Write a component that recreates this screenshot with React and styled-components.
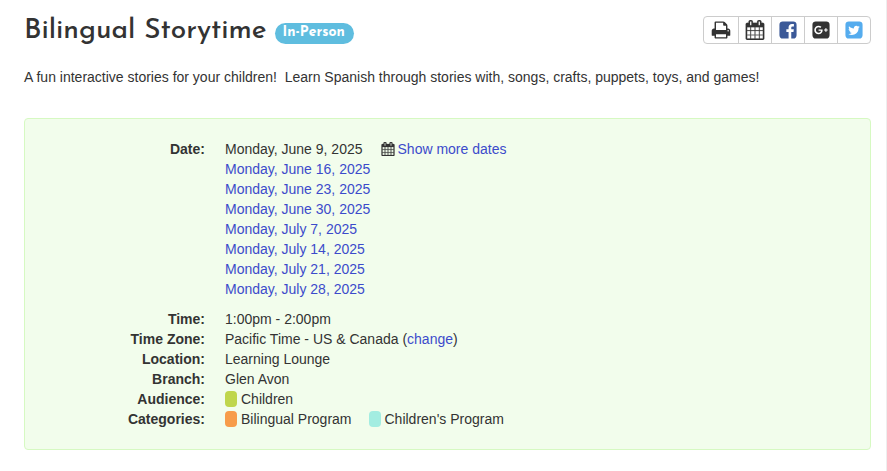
import React from 'react';
import styled, { createGlobalStyle } from 'styled-components';

const PRINT = 'M448 1536h896v-256h-896v256zm0-640h896v-384h-160q-40 0-68-28t-28-68v-160h-640v640zm1152 64q0-26-19-45t-45-19-45 19-19 45 19 45 45 19 45-19 19-45zm128 0v416q0 13-9.5 22.5t-22.5 9.5h-224v160q0 40-28 68t-68 28h-960q-40 0-68-28t-28-68v-160h-224q-13 0-22.5-9.5t-9.5-22.5v-416q0-79 56.5-135.5t135.5-56.5h64v-544q0-40 28-68t68-28h672q40 0 88 20t76 48l152 152q28 28 48 76t20 88v256h64q79 0 135.5 56.5t56.5 135.5z';
const CALENDAR = 'M192 1664h288v-288h-288v288zm352 0h320v-288h-320v288zm-352-352h288v-320h-288v320zm352 0h320v-320h-320v320zm-352-384h288v-288h-288v288zm736 736h320v-288h-320v288zm-384-736h320v-288h-320v288zm768 736h288v-288h-288v288zm-384-352h320v-320h-320v320zm-352-864v-288q0-13-9.5-22.5t-22.5-9.5h-64q-13 0-22.5 9.5t-9.5 22.5v288q0 13 9.5 22.5t22.5 9.5h64q13 0 22.5-9.5t9.5-22.5zm736 864h288v-320h-288v320zm-384-384h320v-288h-320v288zm384 0h288v-288h-288v288zm32-480v-288q0-13-9.5-22.5t-22.5-9.5h-64q-13 0-22.5 9.5t-9.5 22.5v288q0 13 9.5 22.5t22.5 9.5h64q13 0 22.5-9.5t9.5-22.5zm384-64v1280q0 52-38 90t-90 38h-1408q-52 0-90-38t-38-90v-1280q0-52 38-90t90-38h128v-96q0-66 47-113t113-47h64q66 0 113 47t47 113v96h384v-96q0-66 47-113t113-47h64q66 0 113 47t47 113v96h128q52 0 90 38t38 90z';
const FACEBOOK = 'M1376 128q119 0 203.5 84.5t84.5 203.5v960q0 119-84.5 203.5t-203.5 84.5h-188v-595h199l30-232h-229v-148q0-56 23.5-84t91.5-28l122-1v-207q-63-9-178-9-136 0-217.5 80t-81.5 226v171h-200v232h200v595h-532q-119 0-203.5-84.5t-84.5-203.5v-960q0-119 84.5-203.5t203.5-84.5h960z';
const GOOGLE_PLUS = 'M1045 905q0-26-6-64h-362v132h217q-3 24-16.5 50t-37.5 53-66.5 44.5-96.5 17.5q-99 0-169-71t-70-171 70-171 169-71q92 0 153 59l104-101q-108-100-257-100-160 0-272 112.5t-112 271.5 112 271.5 272 112.5q165 0 266.5-105t101.5-270zm345 46h109v-110h-109v-110h-110v110h-110v110h110v110h110v-110zm274-535v960q0 119-84.5 203.5t-203.5 84.5h-960q-119 0-203.5-84.5t-84.5-203.5v-960q0-119 84.5-203.5t203.5-84.5h960q119 0 203.5 84.5t84.5 203.5z';
const TWITTER = 'M1408 610q-56 25-121 34 68-40 93-117-65 38-134 51-61-66-153-66-87 0-148.5 61.5t-61.5 148.5q0 29 5 48-129-7-242-65t-192-155q-29 50-29 106 0 114 91 175-47-1-100-26v2q0 75 50 133.5t123 72.5q-29 8-51 8-13 0-39-4 21 63 74.5 104t121.5 42q-116 90-261 90-26 0-50-3 148 94 322 94 112 0 210-35.5t168-95 120.5-137 75-162 24.5-168.5q0-18-1-27 63-45 105-109zm256-194v960q0 119-84.5 203.5t-203.5 84.5h-960q-119 0-203.5-84.5t-84.5-203.5v-960q0-119 84.5-203.5t203.5-84.5h960q119 0 203.5 84.5t84.5 203.5z';

const actions = [
    { label: 'Print', path: PRINT, color: '#333' },
    { label: 'Add to calendar', path: CALENDAR, color: '#333', weight: 16 },
    { label: 'Share on Facebook', path: FACEBOOK, color: '#3b5998' },
    { label: 'Share on Google Plus', path: GOOGLE_PLUS, color: '#333' },
    { label: 'Share on Twitter', path: TWITTER, color: '#55acee' },
];

const moreDates = [
    'Monday, June 16, 2025',
    'Monday, June 23, 2025',
    'Monday, June 30, 2025',
    'Monday, July 7, 2025',
    'Monday, July 14, 2025',
    'Monday, July 21, 2025',
    'Monday, July 28, 2025',
];

const Icon = ({ path, size, weight = 0 }) => (
    <IconSvg viewBox="0 0 1792 1792" $size={size} aria-hidden="true">
        <path d={path} stroke="currentColor" strokeWidth={weight} />
    </IconSvg>
);

const Field = ({ label, children }) => (
    <FieldRow>
        <FieldLabel>{label}:</FieldLabel>
        <FieldValue>{children}</FieldValue>
    </FieldRow>
);

const App = () => (
    <Page>
        <GlobalStyle />
        <Header>
            <Title>Bilingual Storytime</Title>
            <Badge>In-Person</Badge>
            <ButtonGroup>
                {actions.map(({ label, path, color, weight }) => (
                    <ActionButton key={label} type="button" aria-label={label} $color={color}>
                        <Icon path={path} size={20} weight={weight} />
                    </ActionButton>
                ))}
            </ButtonGroup>
        </Header>
        <Description>
            A fun interactive stories for your children!&nbsp; Learn Spanish through stories with, songs, crafts, puppets, toys, and games!
        </Description>
        <Details>
            <Field label="Date">
                <DateLine>
                    <span>Monday, June 9, 2025</span>
                    <ShowMore>
                        <Icon path={CALENDAR} size={14} weight={30} />
                        <Link href="#dates">Show more dates</Link>
                    </ShowMore>
                </DateLine>
                <DateList>
                    {moreDates.map(date => (
                        <li key={date}><Link href="#date">{date}</Link></li>
                    ))}
                </DateList>
            </Field>
            <Field label="Time">1:00pm - 2:00pm</Field>
            <Field label="Time Zone">
                Pacific Time - US &amp; Canada (<Link href="#timezone">change</Link>)
            </Field>
            <Field label="Location">Learning Lounge</Field>
            <Field label="Branch">Glen Avon</Field>
            <Field label="Audience">
                <Tags>
                    <Tag $color="#bfd64b">Children</Tag>
                </Tags>
            </Field>
            <Field label="Categories">
                <Tags>
                    <Tag $color="#f79c4a">Bilingual Program</Tag>
                    <Tag $color="#a3ede1">Children's Program</Tag>
                </Tags>
            </Field>
        </Details>
    </Page>
);

export default App;

const GlobalStyle = createGlobalStyle`
    * {
        box-sizing: border-box;
    }
    body {
        margin: 0;
        background: #fff;
        color: #333;
        font-family: "Liberation Sans", Arial, sans-serif;
        font-size: 14px;
        line-height: 20px;
    }
`;

const Page = styled.main`
    min-height: 100vh;
    padding: 12px 15px 20px 24px;
    border-right: 1px solid #eee;
`;

const Header = styled.header`
    display: flex;
    align-items: center;
    height: 36px;
`;

const Title = styled.h1`
    margin: 0;
    padding-top: 2px;
    font-family: "Josefin Sans", Lato, sans-serif;
    font-size: 28px;
    font-weight: 500;
    line-height: 36px;
`;

const Badge = styled.span`
    margin: 7px 0 0 8px;
    padding: 1px 9px 2px 8px;
    border-radius: 11px;
    background: #5fbddf;
    color: #fff;
    font-family: "Josefin Sans", Lato, sans-serif;
    font-size: 14px;
    font-weight: 700;
    line-height: 18px;
`;

const ButtonGroup = styled.div`
    display: flex;
    margin-left: auto;
    border: 1px solid #ccc;
    border-radius: 4px;
    background: #fff;
`;

const ActionButton = styled.button`
    display: flex;
    align-items: center;
    padding: 3px 6px;
    border: none;
    background: none;
    color: ${props => props.$color};
    cursor: pointer;

    & + & {
        border-left: 1px solid #ccc;
    }

    &:first-child {
        padding: 3px 7px;
    }
`;

const IconSvg = styled.svg`
    flex: none;
    width: ${props => props.$size}px;
    height: ${props => props.$size}px;
    fill: currentColor;
`;

const Description = styled.p`
    margin: 19px 0 31px;
`;

const Details = styled.dl`
    margin: 0;
    padding: 20px;
    border: 1px solid #d6f9c2;
    border-radius: 4px;
    background: #f2fdec;
`;

const FieldRow = styled.div`
    display: grid;
    grid-template-columns: 160px 1fr;
    column-gap: 20px;
`;

const FieldLabel = styled.dt`
    font-weight: 700;
    text-align: right;
`;

const FieldValue = styled.dd`
    margin: 0;
`;

const DateLine = styled.div`
    display: flex;
    gap: 18px;
`;

const ShowMore = styled.span`
    display: flex;
    align-items: center;
    gap: 3px;
`;

const DateList = styled.ul`
    margin: 0 0 10px;
    padding: 0;
    list-style: none;
`;

const Link = styled.a`
    color: #3c4bcb;
    text-decoration: none;

    &:hover {
        text-decoration: underline;
    }
`;

const Tags = styled.div`
    display: flex;
    flex-wrap: wrap;
    gap: 0 17px;
`;

const Tag = styled.span`
    display: flex;
    align-items: center;
    gap: 4px;

    &::before {
        content: '';
        width: 12px;
        height: 16px;
        border-radius: 4px;
        background: ${props => props.$color};
    }
`;
